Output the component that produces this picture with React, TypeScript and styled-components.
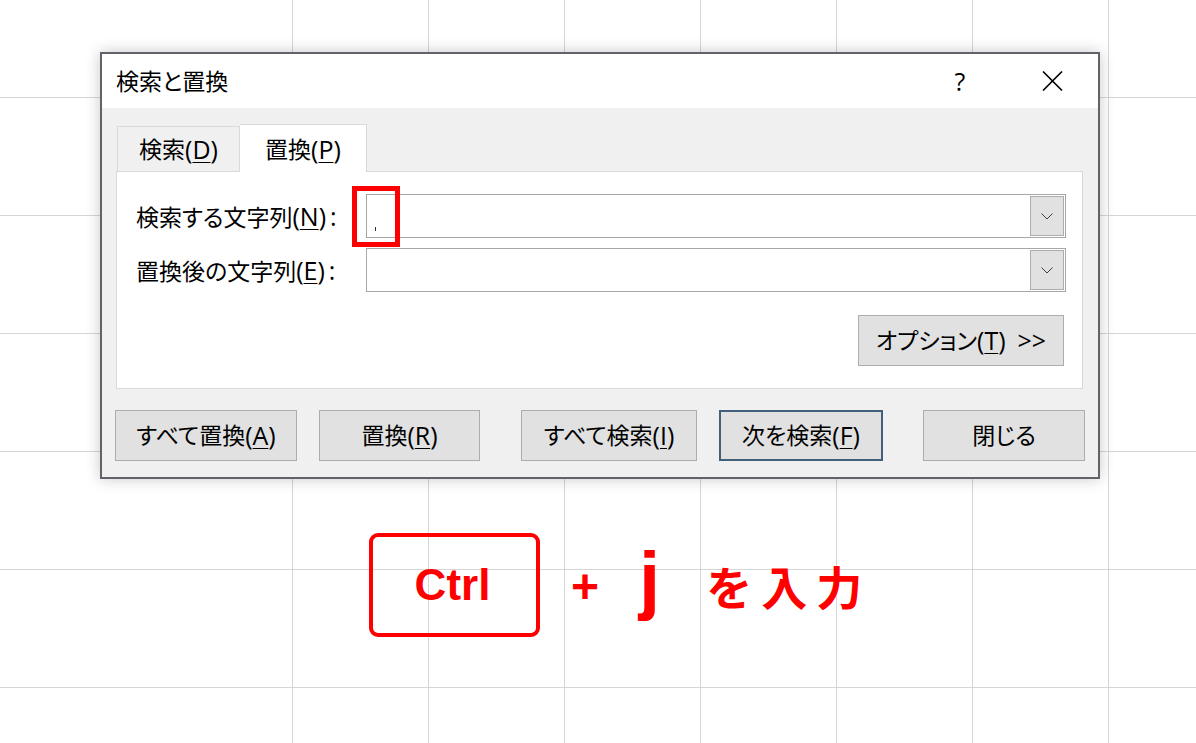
import React from "react";
import styled, { createGlobalStyle } from "styled-components";

const UI_FONT = `"Open Sans", "Noto Sans CJK JP", sans-serif`;
const RED = "#ff0000";

const GlobalStyle = createGlobalStyle`
  html, body {
    margin: 0;
    padding: 0;
    background: #ffffff;
  }
  body {
    font-family: ${UI_FONT};
  }
`;

/* Spreadsheet-like backdrop: horizontal rules everywhere, vertical rules from x=292 on */
const Sheet = styled.div`
  position: relative;
  width: 1196px;
  height: 743px;
  overflow: hidden;
  box-sizing: border-box;
  padding: 52px 0 0 100px;
  display: flex;
  flex-direction: column;
  background-color: #ffffff;
  background-image:
    linear-gradient(to bottom, transparent 97px, #d6d6d6 97px, #d6d6d6 98px, transparent 98px),
    linear-gradient(to right, #ffffff 0, #ffffff 292px, transparent 292px),
    linear-gradient(to right, transparent 20px, #d6d6d6 20px, #d6d6d6 21px, transparent 21px);
  background-size: 100% 118px, 100% 100%, 136px 100%;
  background-repeat: repeat-y, no-repeat, repeat-x;
`;

const Dialog = styled.div`
  width: 1000px;
  height: 427px;
  box-sizing: border-box;
  border: 2px solid #60646a;
  background: #f0f0f0;
  box-shadow: 0 0 14px rgba(0, 0, 0, 0.22);
  display: flex;
  flex-direction: column;
  color: #000;
  font-family: ${UI_FONT};
  font-feature-settings: "palt";
`;

const TitleBar = styled.div`
  height: 54px;
  flex: none;
  background: #ffffff;
  display: flex;
  align-items: center;
  padding-left: 14px;
`;

const Title = styled.div`
  font-size: 23px;
  line-height: 1;
  flex: 1;
`;

const CaptionButton = styled.div`
  width: 92px;
  height: 54px;
  display: flex;
  align-items: center;
  justify-content: center;
  font-family: "Open Sans", sans-serif;
  font-size: 25px;
  line-height: 1;
`;

const DialogBody = styled.div`
  flex: 1;
  display: flex;
  flex-direction: column;
  padding: 16px 15px 0 14px;
`;

const TabStrip = styled.div`
  display: flex;
  align-items: flex-end;
  height: 48px;
  padding-left: 1px;
  margin-bottom: -1px;
`;

const Tab = styled.div<{ $active?: boolean }>`
  box-sizing: border-box;
  width: ${(p) => (p.$active ? 127 : 123)}px;
  height: ${(p) => (p.$active ? 48 : 46)}px;
  border: 1px solid #d9d9d9;
  border-bottom: ${(p) => (p.$active ? "none" : "1px solid #d9d9d9")};
  border-left: ${(p) => (p.$active ? "none" : "1px solid #d9d9d9")};
  background: ${(p) => (p.$active ? "#ffffff" : "#f0f0f0")};
  position: ${(p) => (p.$active ? "relative" : "static")};
  z-index: ${(p) => (p.$active ? 1 : "auto")};
  display: flex;
  align-items: center;
  justify-content: center;
  padding-top: ${(p) => (p.$active ? 2 : 0)}px;
  font-size: 23px;
  line-height: 1;
`;

const Panel = styled.div`
  height: 218px;
  box-sizing: border-box;
  border: 1px solid #d9d9d9;
  background: #ffffff;
  padding: 22px 16px 0 19px;
  display: flex;
  flex-direction: column;
`;

const FieldRow = styled.div<{ $gap?: number }>`
  display: flex;
  align-items: center;
  height: 44px;
  margin-top: ${(p) => p.$gap ?? 0}px;
`;

const FieldLabel = styled.div`
  width: 230px;
  flex: none;
  font-size: 23px;
  line-height: 1;
  white-space: nowrap;
`;

const Combo = styled.div`
  position: relative;
  flex: 1;
  height: 100%;
  box-sizing: border-box;
  border: 1px solid #a7a7a7;
  background: #ffffff;
  display: flex;
  align-items: stretch;
  padding: 1px;
`;

const ComboText = styled.div`
  flex: 1;
  display: flex;
  align-items: flex-end;
  padding: 0 0 5px 7px;
`;

/* the control character typed into the box shows as a tiny tick */
const ControlGlyph = styled.span`
  display: block;
  width: 1px;
  height: 4px;
  background: #333;
`;

const DropButton = styled.div`
  width: 34px;
  flex: none;
  box-sizing: border-box;
  border: 1px solid #adadad;
  background: #e1e1e1;
  display: flex;
  align-items: center;
  justify-content: center;
`;

const Highlight = styled.div`
  position: absolute;
  left: -15px;
  top: -9px;
  width: 48px;
  height: 61px;
  box-sizing: border-box;
  border: 5px solid ${RED};
  pointer-events: none;
`;

const OptionRow = styled.div`
  display: flex;
  justify-content: flex-end;
  margin-top: 23px;
  padding-right: 2px;
`;

const PushButton = styled.div<{ $w: number; $gap?: number; $default?: boolean }>`
  width: ${(p) => p.$w}px;
  height: 51px;
  flex: none;
  box-sizing: border-box;
  margin-left: ${(p) => p.$gap ?? 0}px;
  background: #e1e1e1;
  border: ${(p) => (p.$default ? "2px solid #42607a" : "1px solid #adadad")};
  display: flex;
  align-items: center;
  justify-content: center;
  font-size: 23px;
  line-height: 1;
  white-space: nowrap;
`;

const ButtonRow = styled.div`
  display: flex;
  margin: 21px 0 0 -1px;
`;

const Accel = styled.span`
  font-family: "Open Sans", sans-serif;
  font-size: 25px;
`;

const Colon = styled.span`
  margin-left: 4px;
  font-family: "Open Sans", sans-serif;
  font-size: 25px;
`;

const AccelKey = styled.span`
  text-decoration: underline;
  text-decoration-thickness: 1px;
  text-underline-offset: 3px;
`;

const Spaced = styled.span`
  margin-left: 12px;
  font-family: "Open Sans", sans-serif;
  font-size: 25px;
`;

/* keyboard hint underneath the dialog */
const Hint = styled.div`
  display: flex;
  align-items: center;
  margin: 54px 0 0 269px;
  color: ${RED};
`;

const KeyCap = styled.div`
  width: 171px;
  height: 104px;
  box-sizing: border-box;
  border: 4px solid ${RED};
  border-radius: 9px;
  display: flex;
  align-items: center;
  justify-content: center;
  font-family: "Liberation Sans", Arial, sans-serif;
  font-weight: 700;
  font-size: 44px;
  line-height: 1;
  padding-right: 4px;
`;

const Plus = styled.div`
  margin-left: 31px;
  font-family: "Liberation Sans", Arial, sans-serif;
  font-weight: 700;
  font-size: 48px;
  line-height: 1;
  margin-top: 4px;
`;

const Letter = styled.div`
  margin-left: 40px;
  font-family: "Liberation Sans", Arial, sans-serif;
  font-weight: 700;
  font-size: 76px;
  line-height: 1;
  margin-bottom: 12px;
`;

const HintText = styled.div`
  margin-left: 46px;
  font-family: "Noto Sans CJK JP", sans-serif;
  font-weight: 700;
  font-size: 46px;
  letter-spacing: 9px;
  line-height: 1;
`;

const Mn: React.FC<{ k: string }> = ({ k }) => (
  <Accel>
    (<AccelKey>{k}</AccelKey>)
  </Accel>
);

const Chevron = () => (
  <svg width="12" height="7" viewBox="0 0 12 7">
    <polyline points="0.5,0.5 6,6 11.5,0.5" fill="none" stroke="#404040" strokeWidth="1" />
  </svg>
);

const CloseGlyph = () => (
  <svg width="21" height="20" viewBox="0 0 21 20">
    <line x1="1" y1="0.5" x2="20" y2="19.5" stroke="#000" strokeWidth="1.6" />
    <line x1="20" y1="0.5" x2="1" y2="19.5" stroke="#000" strokeWidth="1.6" />
  </svg>
);

export default function App() {
  return (
    <>
      <GlobalStyle />
      <Sheet>
        <Dialog>
          <TitleBar>
            <Title>検索と置換</Title>
            <CaptionButton>?</CaptionButton>
            <CaptionButton>
              <CloseGlyph />
            </CaptionButton>
          </TitleBar>
          <DialogBody>
            <TabStrip>
              <Tab>
                検索<Mn k="D" />
              </Tab>
              <Tab $active>
                置換<Mn k="P" />
              </Tab>
            </TabStrip>
            <Panel>
              <FieldRow>
                <FieldLabel>
                  検索する文字列<Mn k="N" />
                  <Colon>:</Colon>
                </FieldLabel>
                <Combo>
                  <ComboText>
                    <ControlGlyph />
                  </ComboText>
                  <DropButton>
                    <Chevron />
                  </DropButton>
                  <Highlight />
                </Combo>
              </FieldRow>
              <FieldRow $gap={10}>
                <FieldLabel>
                  置換後の文字列<Mn k="E" />
                  <Colon>:</Colon>
                </FieldLabel>
                <Combo>
                  <ComboText />
                  <DropButton>
                    <Chevron />
                  </DropButton>
                </Combo>
              </FieldRow>
              <OptionRow>
                <PushButton $w={206}>
                  オプション<Mn k="T" />
                  <Spaced>&gt;&gt;</Spaced>
                </PushButton>
              </OptionRow>
            </Panel>
            <ButtonRow>
              <PushButton $w={182}>
                すべて置換<Mn k="A" />
              </PushButton>
              <PushButton $w={161} $gap={22}>
                置換<Mn k="R" />
              </PushButton>
              <PushButton $w={176} $gap={41}>
                すべて検索<Mn k="I" />
              </PushButton>
              <PushButton $w={164} $gap={22} $default>
                次を検索<Mn k="F" />
              </PushButton>
              <PushButton $w={162} $gap={40}>
                閉じる
              </PushButton>
            </ButtonRow>
          </DialogBody>
        </Dialog>
        <Hint>
          <KeyCap>Ctrl</KeyCap>
          <Plus>+</Plus>
          <Letter>j</Letter>
          <HintText>を入力</HintText>
        </Hint>
      </Sheet>
    </>
  );
}
